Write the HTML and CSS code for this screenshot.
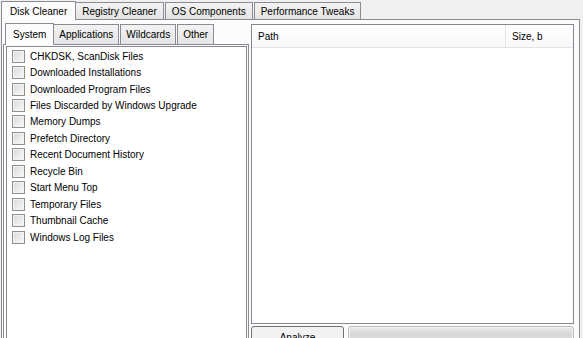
FILE: index.html
```html
<!DOCTYPE html>
<html lang="en">
<head>
    <meta charset="UTF-8">
    <title>Disk Cleaner</title>
    <link rel="stylesheet" href="styles.css">
</head>
<body>
    <div class="tabstrip">
        <div class="tab selected">Disk Cleaner</div>
        <div class="tab">Registry Cleaner</div>
        <div class="tab">OS Components</div>
        <div class="tab">Performance Tweaks</div>
    </div>

    <div class="page">
        <div class="left">
            <div class="tabstrip sub">
                <div class="tab selected">System</div>
                <div class="tab">Applications</div>
                <div class="tab">Wildcards</div>
                <div class="tab">Other</div>
            </div>
            <div class="subpage">
                <ul class="checklist">
                    <li><span class="check"></span>CHKDSK, ScanDisk Files</li>
                    <li><span class="check"></span>Downloaded Installations</li>
                    <li><span class="check"></span>Downloaded Program Files</li>
                    <li><span class="check"></span>Files Discarded by Windows Upgrade</li>
                    <li><span class="check"></span>Memory Dumps</li>
                    <li><span class="check"></span>Prefetch Directory</li>
                    <li><span class="check"></span>Recent Document History</li>
                    <li><span class="check"></span>Recycle Bin</li>
                    <li><span class="check"></span>Start Menu Top</li>
                    <li><span class="check"></span>Temporary Files</li>
                    <li><span class="check"></span>Thumbnail Cache</li>
                    <li><span class="check"></span>Windows Log Files</li>
                </ul>
            </div>
        </div>

        <div class="right">
            <div class="listview">
                <div class="header">
                    <div class="col path">Path</div>
                    <div class="col size">Size, b</div>
                </div>
            </div>
            <div class="actions">
                <button class="analyze">Analyze</button>
                <div class="progress"></div>
            </div>
        </div>
    </div>
</body>
</html>
```

FILE: styles.css
```css
body {
    margin: 0;
    width: 583px;
    height: 338px;
    overflow: hidden;
    background-color: #f0f0f0;
    font-family: "Liberation Sans", Arial, sans-serif;
    font-size: 10px;
    color: #000;
}

.tabstrip {
    display: flex;
    align-items: flex-end;
    height: 19px;
    padding-left: 3px;
}

.tab {
    position: relative;
    height: 16px;
    line-height: 17px;
    padding: 0 6px;
    margin-right: 1px;
    border: 1px solid #898c95;
    border-bottom: none;
    background: linear-gradient(#f3f3f3, #e4e4e4);
    white-space: nowrap;
}

.tab.selected {
    height: 18px;
    line-height: 19px;
    padding: 0 8px;
    margin: 0 -1px -1px -2px;
    background: #fcfcfc;
    z-index: 1;
}

.page {
    display: flex;
    gap: 2px;
    width: 573px;
    height: 330px;
    margin-left: 1px;
    padding: 2px 3px 0 1px;
    border: 1px solid #898c95;
    border-bottom: none;
    background-color: #fcfcfc;
}

.left {
    display: flex;
    flex-direction: column;
    width: 246px;
}

.tabstrip.sub {
    height: 22px;
    padding-left: 4px;
}

.tabstrip.sub .tab {
    height: 19px;
    line-height: 20px;
    padding: 0 5px;
}

.tabstrip.sub .tab.selected {
    height: 21px;
    line-height: 21px;
    padding: 0 7px;
}

.subpage {
    flex: 1;
    padding: 1px 1px 0 2px;
    border: 1px solid #898c95;
    border-bottom: none;
}

.checklist {
    list-style: none;
    margin: 0;
    padding: 1px 0 0 5px;
    height: 100%;
    box-sizing: border-box;
    border: 1px solid #828790;
    border-bottom: none;
    background-color: #fff;
}

.checklist li {
    display: flex;
    align-items: center;
    gap: 5px;
    height: 16.45px;
    white-space: nowrap;
}

.check {
    width: 11px;
    height: 11px;
    border: 1px solid #8e8f8f;
    background: linear-gradient(135deg, #d9d9d9, #fafafa);
    box-shadow: inset 0 0 0 1px #f4f4f4;
}

.right {
    display: flex;
    flex-direction: column;
    gap: 1px;
    width: 323px;
    padding-top: 2px;
}

.listview {
    flex-shrink: 0;
    height: 298px;
    border: 1px solid #828790;
    background-color: #fff;
}

.header {
    display: flex;
    height: 22px;
    border-bottom: 1px solid #e3e4e6;
    background: linear-gradient(#fff, #f7f8f9);
}

.col {
    line-height: 23px;
    padding-left: 6px;
}

.path {
    flex: 1;
    border-right: 1px solid #e3e4e6;
}

.size {
    width: 61px;
}

.actions {
    display: flex;
    gap: 4px;
    padding-top: 1px;
}

.analyze {
    width: 93px;
    height: 23px;
    padding: 0;
    border: 1px solid #707070;
    border-radius: 3px;
    background: linear-gradient(#f2f2f2 50%, #dddddd 50%, #cfcfcf);
    font-family: inherit;
    font-size: 10px;
    color: #000;
}

.progress {
    flex: 1;
    height: 17px;
    border: 1px solid #bcbcbc;
    border-radius: 3px;
    background: linear-gradient(#ececec, #d6d6d6 40%, #e4e4e4);
    box-shadow: inset 0 0 0 1px #f3f3f3;
}
```
